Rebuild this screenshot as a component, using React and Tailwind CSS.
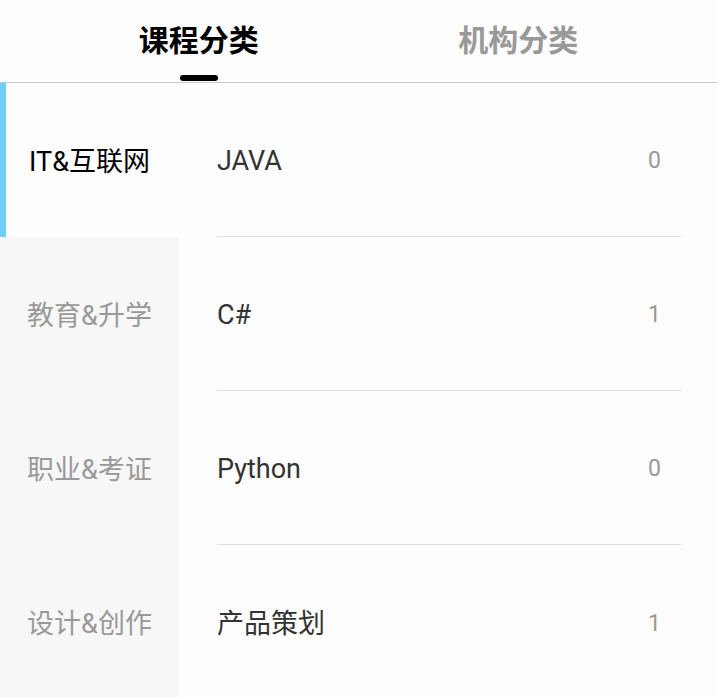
import { useState } from "react";

const categories = ["IT&互联网", "教育&升学", "职业&考证", "设计&创作"];

const courses = [
  { name: "JAVA", count: 0 },
  { name: "C#", count: 1 },
  { name: "Python", count: 0 },
  { name: "产品策划", count: 1 },
];

const tabs = ["课程分类", "机构分类"];

export default function App() {
  const [tab, setTab] = useState(0);
  const [active, setActive] = useState(0);

  return (
    <div
      className="w-[717px] h-[697px] overflow-hidden bg-[#fdfdfd] flex flex-col"
      style={{ fontFamily: 'Roboto, "Noto Sans CJK SC", sans-serif' }}
    >
      <div className="h-[83px] shrink-0 flex px-[39px] border-b border-[#c8c8c8]">
        {tabs.map((t, idx) => (
          <button
            key={t}
            onClick={() => setTab(idx)}
            className="flex-1 relative flex items-center justify-center focus:outline-none"
          >
            <span
              className={`text-[30px] font-bold leading-none ${
                tab === idx ? "text-black" : "text-[#999999]"
              }`}
            >
              {t}
            </span>
            {tab === idx && (
              <span className="absolute bottom-[1px] left-1/2 -translate-x-1/2 w-[38px] h-[6px] rounded-full bg-black" />
            )}
          </button>
        ))}
      </div>

      <div className="flex flex-1">
        <div className="w-[179px] shrink-0 flex flex-col bg-[#f7f7f7]">
          {categories.map((c, idx) => (
            <div
              key={c}
              onClick={() => setActive(idx)}
              className={`relative h-[154px] shrink-0 flex items-center justify-center pt-[4px] cursor-pointer text-[27px] ${
                active === idx ? "bg-[#fdfdfd] text-black" : "text-[#999999]"
              }`}
            >
              {active === idx && (
                <span className="absolute left-0 top-0 bottom-0 w-[6px] bg-[#6dcffc]" />
              )}
              {c}
            </div>
          ))}
        </div>

        <div className="flex-1 pl-[38px] pr-[36px]">
          {courses.map((item, idx) => (
            <div
              key={item.name}
              className={`h-[154px] flex items-center justify-between pt-[4px] ${
                idx < courses.length - 1 ? "border-b border-[#dedede]" : ""
              }`}
            >
              <span className="text-[27px] text-[#333333]">{item.name}</span>
              <span className="text-[23px] text-[#999999] pr-[20px]">{item.count}</span>
            </div>
          ))}
        </div>
      </div>
    </div>
  );
}
